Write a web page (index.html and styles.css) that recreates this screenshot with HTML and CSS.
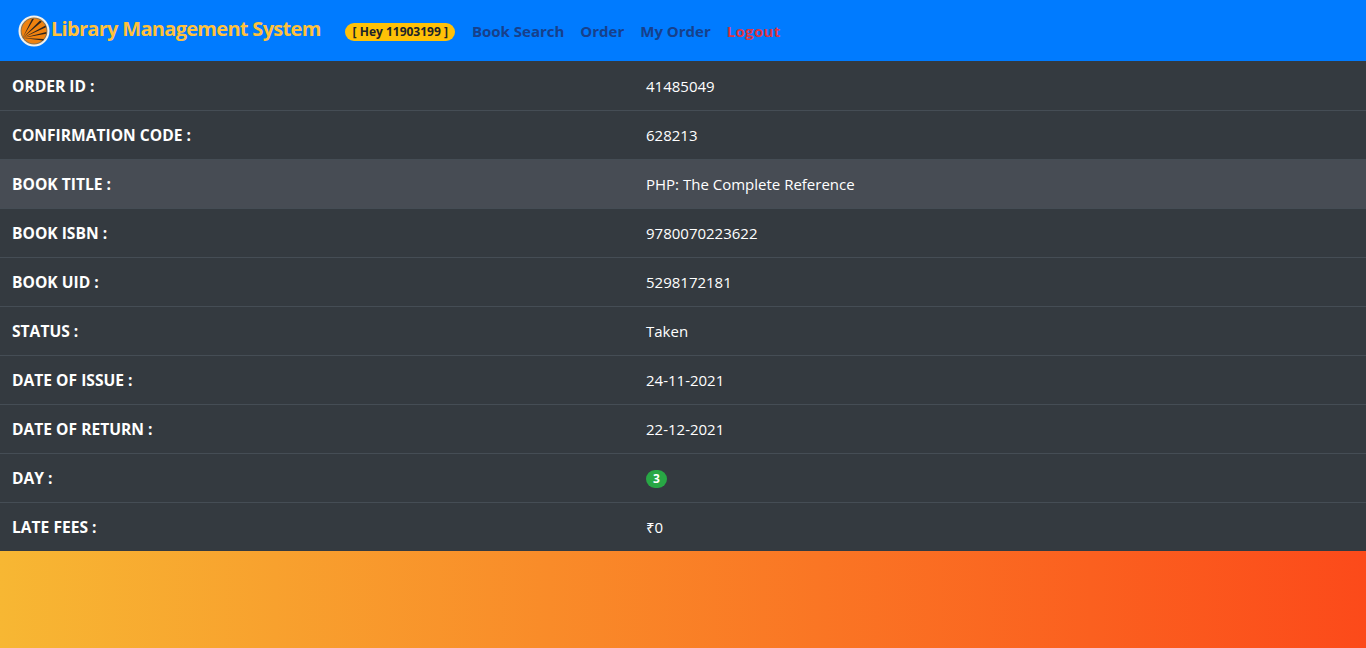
FILE: index.html
```html
<!DOCTYPE html>
<html lang="en">
<head>
  <meta charset="UTF-8">
  <title>Library Management System</title>
  <link rel="stylesheet" href="styles.css">
</head>
<body>

  <nav class="navbar">
    <a class="brand" href="#">
      <svg class="logo" width="32" height="32" viewBox="0 0 32 32">
        <circle cx="16" cy="16" r="15.5" fill="#f4f1ea"/>
        <circle cx="16" cy="16" r="13.4" fill="#8a7350"/>
        <circle cx="16" cy="16" r="12.4" fill="#f0820f"/>
        <path d="M4.5 23 L27.5 10.5 L28 12.3 Z M4.5 23 L22 5.5 L23.8 6.7 Z M4.5 23 L14 3.9 L16 3.7 Z M4.5 23 L28.3 17 L28.2 18.8 Z M4.5 23 L26 24 L25 25.5 Z" fill="#2a2320"/>
      </svg>
      <span>Library Management System</span>
    </a>
    <span class="badge-hey">[ Hey 11903199 ]</span>
    <a class="nav-link nav-first" href="#">Book Search</a>
    <a class="nav-link" href="#">Order</a>
    <a class="nav-link" href="#">My Order</a>
    <a class="nav-link logout" href="#">Logout</a>
  </nav>

  <table class="order-table">
    <tbody>
      <tr><th>ORDER ID :</th><td>41485049</td></tr>
      <tr><th>CONFIRMATION CODE :</th><td>628213</td></tr>
      <tr class="hovered"><th>BOOK TITLE :</th><td>PHP: The Complete Reference</td></tr>
      <tr><th>BOOK ISBN :</th><td>9780070223622</td></tr>
      <tr><th>BOOK UID :</th><td>5298172181</td></tr>
      <tr><th>STATUS :</th><td>Taken</td></tr>
      <tr><th>DATE OF ISSUE :</th><td>24-11-2021</td></tr>
      <tr><th>DATE OF RETURN :</th><td>22-12-2021</td></tr>
      <tr><th>DAY :</th><td><span class="badge-day">3</span></td></tr>
      <tr><th>LATE FEES :</th><td>₹0</td></tr>
    </tbody>
  </table>

</body>
</html>
```

FILE: styles.css
```css
html, body {
  height: 100%;
}

body {
  margin: 0;
  font-family: "Open Sans", "Noto Sans", sans-serif;
  font-size: 16px;
  line-height: 24px;
  color: #ffffff;
  background: linear-gradient(to right, #f7b733, #fc4a1a);
  overflow: hidden;
}

.navbar {
  display: flex;
  align-items: center;
  height: 61px;
  padding: 0 16px 0 18px;
  box-sizing: border-box;
  background-color: #007bff;
}

.brand {
  display: flex;
  align-items: center;
  margin-right: 24px;
  font-size: 20px;
  font-weight: 700;
  color: #ffc13b;
  text-decoration: none;
}

.logo {
  margin-right: 1px;
}

.brand span {
  position: relative;
  top: -2px;
  letter-spacing: -0.7px;
}

.badge-hey {
  margin-top: 2px;
  padding: 2px 7px 2px 8px;
  font-size: 12px;
  font-weight: 700;
  line-height: 14px;
  color: #212529;
  background-color: #ffc107;
  border-radius: 10px;
}

.nav-link {
  margin-left: 16px;
  font-size: 15px;
  font-weight: 700;
  color: #17408b;
  text-decoration: none;
}

.nav-link.nav-first {
  margin-left: 17px;
}

.nav-link.logout {
  color: #dc3545;
  letter-spacing: 0.3px;
}

.order-table {
  width: 100%;
  border-collapse: collapse;
  background-color: #343a40;
}

.order-table th,
.order-table td {
  padding: 12px;
  text-align: left;
  border-top: 1px solid #454d55;
  font-size: 15px;
}

.order-table tr:first-child th,
.order-table tr:first-child td {
  border-top: none;
  padding-top: 13px;
}

.order-table th {
  width: 610px;
  font-size: 15.6px;
}

.order-table tr.hovered {
  background-color: #474c54;
}

.badge-day {
  display: inline-block;
  padding: 0 7px;
  font-size: 12px;
  font-weight: 700;
  line-height: 18px;
  color: #ffffff;
  background-color: #28a745;
  border-radius: 10px;
  vertical-align: middle;
  position: relative;
  top: -1px;
}
```
